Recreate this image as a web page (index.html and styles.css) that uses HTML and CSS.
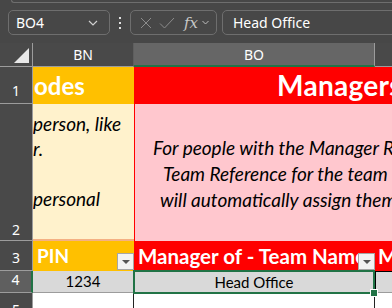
FILE: index.html
```html
<!DOCTYPE html>
<html>
<head>
  <title>Sheet</title>
  <link rel="stylesheet" href="styles.css">
</head>
<body>
  <div class="toolbar">
    <div class="ribbon"></div>
    <div class="bar">
      <div class="namebox">
        <span>BO4</span>
        <svg width="10" height="6" viewBox="0 0 10 6"><path d="M1 1l4 4 4-4" fill="none" stroke="#d0d0d0" stroke-width="1.2"/></svg>
      </div>
      <div class="dots"><i></i><i></i><i></i></div>
      <div class="fxbox">
        <svg width="12" height="12" viewBox="0 0 12 12"><path d="M1 1l10 10M11 1L1 11" fill="none" stroke="#8c8c8c" stroke-width="1"/></svg>
        <svg width="16" height="12" viewBox="0 0 16 12"><path d="M1 6.5l4.5 4.5L15 1" fill="none" stroke="#8c8c8c" stroke-width="1"/></svg>
        <span class="fx">fx</span>
        <svg width="7" height="5" viewBox="0 0 7 5"><path d="M0.5 1l3 3 3-3" fill="none" stroke="#bdbdbd" stroke-width="1"/></svg>
      </div>
      <div class="formula">Head Office</div>
    </div>
  </div>

  <div class="sheet">
    <div class="corner"><span class="tri"></span></div>
    <div class="colhead">BN</div>
    <div class="colhead sel">BO</div>
    <div class="colhead last"></div>

    <div class="rowhead">1</div>
    <div class="cell title-bn">odes</div>
    <div class="cell title-bo merged">Managers</div>

    <div class="rowhead tall">2</div>
    <div class="cell note-bn">
      <div>person, like</div>
      <div>r.</div>
      <div>&nbsp;</div>
      <div>personal</div>
    </div>
    <div class="cell note-bo merged">
      <div class="l1">For people with the Manager Role</div>
      <div class="l2">Team Reference for the team they</div>
      <div class="l3">will automatically assign them</div>
    </div>

    <div class="rowhead">3</div>
    <div class="cell head-bn"><span class="label">PIN</span><span class="drop"></span></div>
    <div class="cell head-bo"><span class="label">Manager of - Team Name</span><span class="drop"></span></div>
    <div class="cell head-bo last"><span class="label">M</span></div>

    <div class="rowhead sel">4</div>
    <div class="cell data">1234</div>
    <div class="cell data active">Head Office<span class="handle"></span></div>
    <div class="cell data last"></div>

    <div class="rowhead">5</div>
    <div class="cell blank"></div>
    <div class="cell blank"></div>
    <div class="cell blank last"></div>
  </div>
</body>
</html>
```

FILE: styles.css
```css
body {
  margin: 0;
  background: #494949;
  font-family: "Noto Sans", sans-serif;
  overflow: hidden;
}
.toolbar {
  height: 43px;
  background: #474747;
}
.ribbon {
  height: 2px;
  margin-left: 11px;
  border-left: 1px solid #6e6e6e;
  border-bottom: 1px solid #6e6e6e;
  border-bottom-left-radius: 4px;
}
.bar {
  display: flex;
  align-items: center;
  height: 25px;
  margin-top: 7px;
  padding-left: 8px;
}
.namebox {
  box-sizing: border-box;
  width: 102px;
  height: 25px;
  border: 1px solid #6e6e6e;
  border-radius: 5px;
  display: flex;
  align-items: center;
  justify-content: space-between;
  padding: 0 11px 0 7px;
  color: #fff;
  font-size: 14px;
}
.dots {
  width: 20px;
  display: flex;
  flex-direction: column;
  align-items: center;
  gap: 3px;
}
.dots i {
  width: 2px;
  height: 2px;
  background: #e0e0e0;
}
.fxbox {
  box-sizing: border-box;
  width: 87px;
  height: 25px;
  border: 1px solid #6e6e6e;
  border-radius: 5px;
  display: flex;
  align-items: center;
  padding-left: 9px;
  gap: 7px;
}
.fx {
  font-family: "DejaVu Serif", serif;
  font-style: italic;
  font-size: 15px;
  color: #c8c8c8;
  margin-left: 2px;
  margin-right: -3px;
}
.formula {
  box-sizing: border-box;
  flex: 1;
  height: 25px;
  margin-left: 5px;
  margin-right: -6px;
  border: 1px solid #6e6e6e;
  border-radius: 5px;
  display: flex;
  align-items: center;
  padding-left: 10px;
  color: #fff;
  font-size: 14px;
}

.sheet {
  display: grid;
  grid-template-columns: 33px 101px 241px 1fr;
  grid-template-rows: 24px 37px 137px 30px 22px 30px;
  font-family: Lato, sans-serif;
}
.corner {
  border-right: 1px solid #9c9c9c;
  border-bottom: 1px solid #9c9c9c;
  position: relative;
}
.tri {
  position: absolute;
  right: 3px;
  bottom: 3px;
  width: 0;
  height: 0;
  border-left: 15px solid transparent;
  border-bottom: 15px solid #e8e8e8;
}
.colhead {
  border-bottom: 1px solid #9c9c9c;
  border-right: 1px solid #5e5e5e;
  color: #fff;
  font-family: "Noto Sans", sans-serif;
  font-size: 14px;
  display: flex;
  align-items: center;
  justify-content: center;
}
.colhead.sel {
  background: #666;
  border-bottom: 2px solid #217346;
  border-right: 1px solid #9c9c9c;
}
.colhead.last {
  border-right: none;
}
.rowhead {
  border-right: 1px solid #9c9c9c;
  border-bottom: 1px solid #9c9c9c;
  color: #fff;
  font-family: "Noto Sans", sans-serif;
  font-size: 14px;
  display: flex;
  align-items: flex-end;
  justify-content: center;
  padding-bottom: 3px;
}
.rowhead.tall {
  padding-bottom: 1px;
}
.rowhead.sel {
  background: #5f5f5f;
  border-right: 2px solid #217346;
}
.cell {
  overflow: hidden;
  white-space: nowrap;
  box-sizing: border-box;
}
.merged {
  grid-column: span 2;
}
.title-bn {
  background: #ffc000;
  color: #fff;
  font-weight: bold;
  font-size: 24px;
  line-height: 37px;
  padding-left: 1px;
}
.title-bo {
  background: #ff0000;
  color: #fff;
  font-weight: bold;
  font-size: 28px;
  letter-spacing: 0.3px;
  line-height: 36px;
  padding-left: 143px;
}
.note-bn {
  background: #fff2cc;
  border-bottom: 2px solid #f4b183;
  font-style: italic;
  font-size: 19px;
  line-height: 25px;
  padding-top: 7px;
  color: #000;
}
.note-bo {
  background: #ffc7ce;
  border-left: 1px solid #ff0000;
  font-style: italic;
  font-size: 19px;
  line-height: 26px;
  padding-top: 31px;
  color: #000;
}
.l1 { padding-left: 18px; }
.l2 { padding-left: 28px; }
.l3 { padding-left: 25px; }
.head-bn,
.head-bo {
  display: flex;
  align-items: flex-end;
  color: #fff;
  font-weight: bold;
  font-size: 19px;
  padding-bottom: 1px;
}
.head-bn {
  background: #ffc000;
  padding-left: 4px;
}
.head-bo {
  background: #ff0000;
  padding-left: 4px;
  font-size: 20.5px;
}
.head-bo.last {
  padding-left: 3px;
}
.label {
  flex: 1;
  overflow: hidden;
  line-height: 28px;
}
.drop {
  flex: none;
  box-sizing: border-box;
  width: 17px;
  height: 17px;
  background: #f3f3f3;
  border: 1px solid #a6a6a6;
  position: relative;
}
.drop::after {
  content: "";
  position: absolute;
  left: 4px;
  top: 6px;
  border-left: 4px solid transparent;
  border-right: 4px solid transparent;
  border-top: 4px solid #555;
}
.data {
  background: #d9d9d9;
  border-bottom: 1px solid #9c9c9c;
  border-right: 1px solid #b0b0b0;
  color: #000;
  font-size: 15px;
  text-align: center;
  line-height: 21px;
}
.data.active {
  position: relative;
  border: 2px solid #217346;
  margin: -1px 0 -1px -1px;
  line-height: 20px;
  overflow: visible;
}
.handle {
  position: absolute;
  right: -5px;
  bottom: -5px;
  width: 6px;
  height: 6px;
  background: #217346;
  border: 1px solid #fff;
}
.data.last {
  border-top: 1px solid #000;
  border-left: 1px solid #000;
  border-right: none;
}
.blank {
  background: #fff;
  border-right: 1px solid #222;
}
.blank.last {
  border-right: none;
}
```
